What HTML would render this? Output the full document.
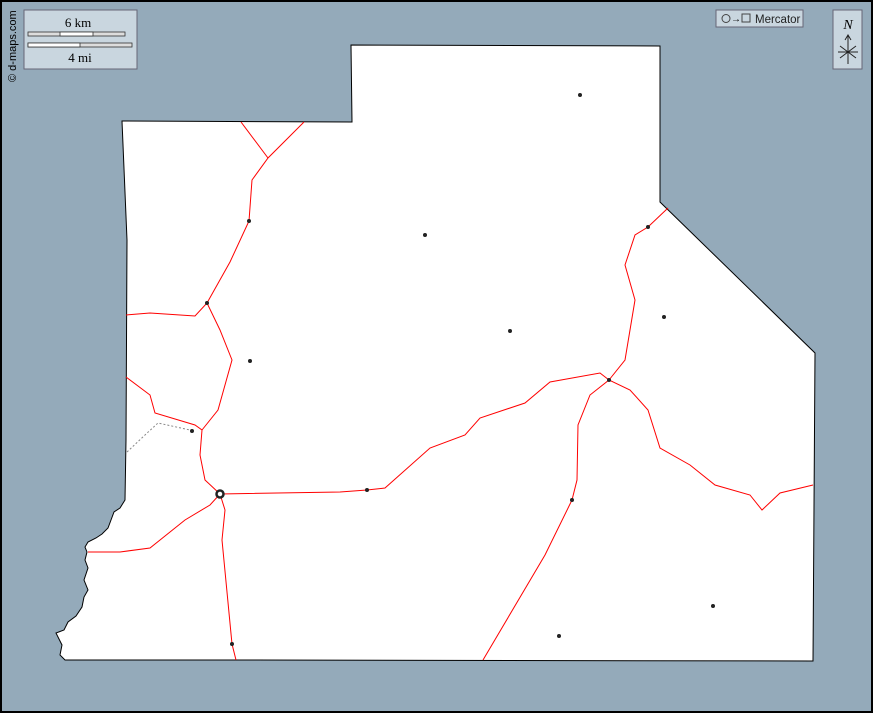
<!DOCTYPE html><html><head><style>body{margin:0}svg{display:block}</style></head><body>
<svg width="873" height="713" viewBox="0 0 873 713" xmlns="http://www.w3.org/2000/svg" font-family="Liberation Serif, serif">
<rect x="0" y="0" width="873" height="713" fill="#94aaba"/>
<path d="M122,121 L352,122 L351,45 L660,46 L660,202 L815,353 L813,661 L237,660 L65,660 L60,655 L62,645 L56,633 L64,630 L68,622 L76,616 L82,607 L84,597 L88,590 L84,580 L88,568 L85,560 L87,552 L85,547 L88,542 L96,538 L102,534 L108,528 L111,520 L114,512 L120,508 L125,500 L126,440 L127,240 Z" fill="#fff" stroke="#000" stroke-width="1"/>
<g fill="none" stroke="#f00" stroke-width="1">
<path d="M241,122 L268,158"/>
<path d="M304,122 L288,138 L268,158 L252,180 L249,221 L230,262 L207,303"/>
<path d="M126,315 L150,313 L195,316 L207,303 L220,330 L232,360 L218,410 L202,430"/>
<path d="M126,377 L150,395 L155,413 L195,425 L202,430 L200,455 L205,480 L220,494"/>
<path d="M220,494 L340,492 L367,490 L385,488 L430,448 L465,435 L480,418 L525,403 L550,382 L600,373 L609,380"/>
<path d="M609,380 L625,360 L630,330 L635,300 L625,265 L635,235 L648,227 L668,208"/>
<path d="M609,380 L630,390 L648,410 L660,448 L690,465 L715,485 L750,495 L762,510 L780,493 L813,485"/>
<path d="M609,380 L590,395 L578,425 L577,480 L572,500 L545,555 L483,660"/>
<path d="M220,494 L225,510 L222,540 L232,644 L236,660"/>
<path d="M220,494 L210,505 L185,520 L150,548 L120,552 L88,552"/>
</g>
<path d="M127,452 L145,435 L158,423 L190,430" fill="none" stroke="#888" stroke-dasharray="2,2"/>
<g fill="#222">
<circle cx="580" cy="95" r="2"/><circle cx="425" cy="235" r="2"/><circle cx="249" cy="221" r="2"/><circle cx="207" cy="303" r="2"/><circle cx="250" cy="361" r="2"/><circle cx="510" cy="331" r="2"/><circle cx="664" cy="317" r="2"/><circle cx="648" cy="227" r="2"/><circle cx="609" cy="380" r="2"/><circle cx="192" cy="431" r="2"/><circle cx="367" cy="490" r="2"/><circle cx="572" cy="500" r="2"/><circle cx="713" cy="606" r="2"/><circle cx="559" cy="636" r="2"/><circle cx="232" cy="644" r="2"/>
</g>
<circle cx="220" cy="494" r="3.5" fill="#fff" stroke="#222" stroke-width="2.5"/>
<rect x="24" y="10" width="113" height="59" fill="#c9d6df" stroke="#667"/>
<text x="78" y="27" font-size="13" text-anchor="middle">6 km</text>
<rect x="28" y="32" width="97" height="4" fill="#ddd" stroke="#333" stroke-width="0.8"/>
<rect x="60" y="32" width="33" height="4" fill="#fff" stroke="#333" stroke-width="0.8"/>
<rect x="28" y="43" width="104" height="4" fill="#ddd" stroke="#333" stroke-width="0.8"/>
<rect x="28" y="43" width="52" height="4" fill="#fff" stroke="#333" stroke-width="0.8"/>
<text x="80" y="62" font-size="13" text-anchor="middle">4 mi</text>
<text transform="translate(16,82) rotate(-90)" font-size="11" font-family="Liberation Sans, sans-serif">© d-maps.com</text>
<rect x="716" y="10" width="87" height="17" fill="#c9d6df" stroke="#667"/>
<circle cx="726" cy="18.5" r="4" fill="none" stroke="#444"/>
<text x="731" y="22" font-size="10" font-family="Liberation Sans, sans-serif">→</text>
<rect x="742" y="14" width="8" height="8" fill="none" stroke="#444"/>
<text x="755" y="23" font-size="11.5" font-family="Liberation Sans, sans-serif" fill="#222">Mercator</text>
<rect x="833" y="10" width="29" height="59" fill="#c9d6df" stroke="#667"/>
<text x="848" y="29" font-size="14" font-style="italic" text-anchor="middle">N</text>
<path d="M848,64 L848,36 M845,40 L848,35 L851,40 M840,46 L856,58 M856,46 L840,58 M838,52 L858,52" stroke="#222" fill="none" stroke-width="1"/>
<rect x="1" y="1" width="871" height="711" fill="none" stroke="#000" stroke-width="2"/>
</svg>
</body></html>
